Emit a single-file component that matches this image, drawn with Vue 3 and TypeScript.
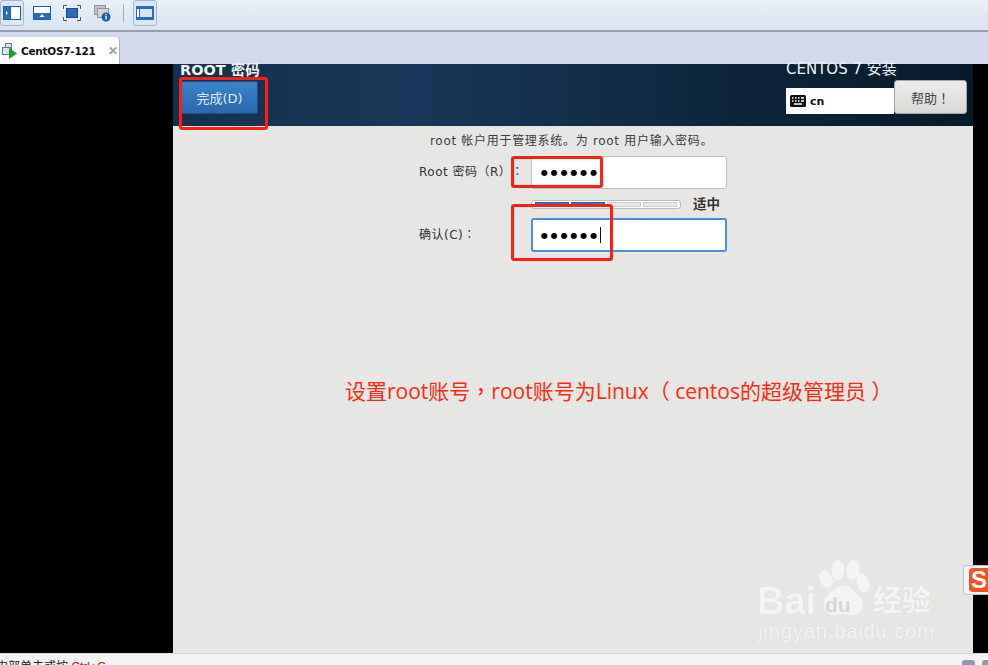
<script setup lang="ts">
const dots = '●●●●●●'
const tools: { id: string; active: boolean }[] = [
  { id: 'a', active: true },
  { id: 'b', active: false },
  { id: 'c', active: false },
  { id: 'd', active: false },
]
</script>

<template>
  <div class="app">
    <div class="toolbar">
      <button v-for="t in tools" :key="t.id" class="tool" :class="{ on: t.active }">
        <svg v-if="t.id === 'a'" width="18" height="14" viewBox="0 0 18 14">
          <rect x="0.5" y="0.5" width="17" height="13" fill="#fff" stroke="#1f5fa8" />
          <rect x="1" y="1" width="7" height="12" fill="#2a6db5" />
          <path d="M3 5l2 2-2 2z" fill="#fff" />
        </svg>
        <svg v-else-if="t.id === 'b'" width="18" height="14" viewBox="0 0 18 14">
          <rect x="0.5" y="0.5" width="17" height="13" fill="#fff" stroke="#1f5fa8" />
          <rect x="1" y="7" width="16" height="6" fill="#2a6db5" />
          <path d="M6.500 11l2.500-3 2.500 3z" fill="#fff" />
        </svg>
        <svg v-else-if="t.id === 'c'" width="18" height="16" viewBox="0 0 18 16">
          <rect x="3.500" y="3.500" width="11" height="9" fill="#2a6db5" stroke="#174e8c" />
          <path d="M0.500 4V0.500H4M14 0.500h3.500V4M17.500 12v3.500H14M4 15.500H0.500V12" fill="none" stroke="#4a5560" />
        </svg>
        <svg v-else width="17" height="17" viewBox="0 0 17 17">
          <rect x="0.500" y="0.500" width="11" height="9" fill="#bfc5cc" stroke="#8b939c" />
          <rect x="3.500" y="3.500" width="11" height="9" fill="#d3d7dc" stroke="#8b939c" />
          <circle cx="12" cy="12" r="4.500" fill="#1f5fa8" />
          <rect x="11.400" y="11" width="1.300" height="3.500" fill="#fff" />
          <rect x="11.400" y="9" width="1.300" height="1.300" fill="#fff" />
        </svg>
      </button>
      <span class="sep"></span>
      <button class="tool on">
        <svg width="18" height="14" viewBox="0 0 18 14">
          <rect x="0" y="0" width="18" height="14" fill="#2a6db5" />
          <rect x="4" y="3" width="12" height="8" fill="#d6e4f3" />
          <rect x="1" y="3" width="2" height="8" fill="#fff" />
        </svg>
      </button>
    </div>

    <div class="tabbar">
      <div class="tab">
        <svg class="vm" width="16" height="16" viewBox="0 0 16 16">
          <rect x="3.500" y="0.500" width="6" height="6" fill="#d9e3ef" stroke="#5d7a9c" />
          <rect x="0.500" y="4.500" width="8" height="7" fill="#d9e3ef" stroke="#5d7a9c" />
          <path d="M7 5l8 5.500-8 5.500z" fill="#1ea32a" />
        </svg>
        <span class="tab-name">CentOS7-121</span>
        <span class="tab-x">✕</span>
      </div>
    </div>

    <div class="stage">
      <div class="side-left"></div>
      <div class="screen">
        <header class="head">
          <div class="head-left">
            <div class="title">ROOT 密码</div>
            <button class="done">完成(D)</button>
          </div>
          <div class="head-right">
            <div class="product">CENTOS 7 安装</div>
            <div class="head-row">
              <div class="kbd">
                <svg width="16" height="12" viewBox="0 0 16 12">
                  <rect width="16" height="12" rx="1.500" fill="#111" />
                  <path d="M2 3h1.500M5 3h1.500M8 3h1.500M11 3h3M2 6h1.500M5 6h1.500M8 6h1.500M11 6h3M4 9h8" stroke="#fff" stroke-width="1.300" />
                </svg>
                <span>cn</span>
              </div>
              <button class="help">帮助！</button>
            </div>
          </div>
        </header>

        <main class="body">
          <p class="intro">root 帐户用于管理系统。为 root 用户输入密码。</p>
          <div class="row first">
            <label class="lbl">Root 密码（R）<span class="colon">：</span></label>
            <div class="field">{{ dots }}</div>
          </div>
          <div class="meter-row">
            <div class="meter">
              <i class="fill"></i><i class="fill"></i><i></i><i></i>
            </div>
            <span class="meter-txt">适中</span>
          </div>
          <div class="row second">
            <label class="lbl">确认(C)：</label>
            <div class="field focus">{{ dots }}<b class="caret"></b></div>
          </div>
          <p class="note">设置root账号，root账号为Linux（ centos的超级管理员 ）</p>
        </main>

        <span class="mark m1"></span>
        <span class="mark m2"></span>
        <span class="mark m3"></span>
      </div>
      <div class="side-right"></div>
    </div>

    <div class="status">
      <span class="status-txt">内部单击或按 <em>Ctrl+G</em></span>
      <span class="status-icons"><i></i><i></i></span>
    </div>

    <div class="wm">
      <svg class="paw" width="52" height="56" viewBox="0 0 52 56">
        <g fill="#f4f4f3">
          <ellipse cx="8" cy="19" rx="6.500" ry="9" transform="rotate(-20 8 19)" />
          <ellipse cx="20" cy="10" rx="6.500" ry="10" />
          <ellipse cx="35" cy="10" rx="6.500" ry="10" transform="rotate(6 35 10)" />
          <ellipse cx="45" cy="23" rx="6" ry="10" transform="rotate(-18 45 23)" />
          <path d="M26 26c6 0 9 4 14 9 7 6 7 20-6 20-4 0-6-1-8-1s-5 1-9 1c-13 0-14-13-7-20 5-5 9-9 16-9z" />
        </g>
      </svg>
      <span class="wm-bai">Bai</span>
      <span class="wm-du">du</span>
      <span class="wm-jy">经验</span>
      <span class="wm-url">jingyan.baidu.com</span>
    </div>

    <div class="sogou"><span>S</span></div>
  </div>
</template>

<style>
html, body { margin: 0; padding: 0; overflow: hidden; background: #fff; }
</style>

<style scoped>
.app {
  position: relative;
  width: 988px;
  height: 665px;
  overflow: hidden;
  display: flex;
  flex-direction: column;
  font-family: "Liberation Sans", "Noto Sans CJK SC", sans-serif;
}
.toolbar {
  height: 30px;
  flex: none;
  display: flex;
  align-items: flex-start;
  gap: 6px;
  background: linear-gradient(#e9f0f8, #d8e4f1);
  border-bottom: 2px solid #9a9fa8;
}
.tool {
  width: 24px;
  height: 26px;
  padding: 0;
  margin: 0;
  border: 1px solid transparent;
  border-radius: 3px;
  background: none;
  display: flex;
  align-items: center;
  justify-content: center;
}
.tool.on {
  border-color: #9fb8d8;
  background: #dbe7f5;
}
.sep {
  width: 1px;
  height: 18px;
  background: #a4afbb;
  margin: 4px 3px 0 3px;
}
.tabbar {
  height: 32px;
  flex: none;
  display: flex;
  align-items: flex-end;
  background: #d3d9ec;
}
.tab {
  width: 120px;
  height: 27px;
  box-sizing: border-box;
  background: #fff;
  border-right: 1px solid #a8b0c4;
  border-top-right-radius: 4px;
  display: flex;
  align-items: center;
  gap: 3px;
  padding-left: 2px;
}
.vm { flex: none; }
.tab-name {
  font-family: "DejaVu Sans", sans-serif;
  font-size: 10.500px;
  font-weight: 700;
  color: #111;
  white-space: nowrap;
  letter-spacing: -0.25px;
}
.tab-x { font-size: 12px; color: #8fa0b3; margin-left: 9px; font-weight: 700; }
.stage {
  flex: 1;
  display: flex;
  min-height: 0;
  background: #000;
}
.side-left { width: 173px; flex: none; background: #000; }
.side-right { flex: 1; background: #000; }
.screen {
  position: relative;
  width: 800px;
  flex: none;
  display: flex;
  flex-direction: column;
  background: #e6e6e4;
}
.head {
  height: 62px;
  flex: none;
  box-sizing: border-box;
  display: flex;
  justify-content: space-between;
  background: linear-gradient(90deg, #14304f 0%, #17385a 30%, #0d2740 65%, #071a2a 100%);
  color: #fff;
}
.head-left { padding-left: 7px; }
.title {
  font-family: "DejaVu Sans", "Noto Sans CJK SC", sans-serif;
  font-weight: 700;
  font-size: 14.500px;
  line-height: 14px;
  margin-top: -1px;
  color: #f2f2f2;
  white-space: nowrap;
}
.done {
  display: block;
  width: 77px;
  height: 33px;
  margin: 4px 0 0 1px;
  padding: 0;
  border: 1px solid #1c4f87;
  border-radius: 2px;
  background: linear-gradient(#3b83cc, #2a67ae);
  color: #dfe9f4;
  font-family: "DejaVu Sans", "Noto Sans CJK SC", sans-serif;
  font-size: 13px;
}
.head-right { width: 187px; }
.product {
  font-family: "DejaVu Sans", "Noto Sans CJK SC", sans-serif;
  font-size: 15px;
  line-height: 14px;
  color: #eef1f4;
  margin-top: -2px;
  white-space: nowrap;
}
.head-row { display: flex; align-items: flex-start; margin-top: 1px; }
.kbd {
  margin-top: 11px;
  width: 108px;
  height: 26px;
  background: #fff;
  display: flex;
  align-items: center;
  gap: 4px;
  padding-left: 4px;
  box-sizing: border-box;
  color: #111;
  font-family: "DejaVu Sans", sans-serif;
  font-size: 11px;
  font-weight: 700;
}
.help {
  width: 73px;
  height: 34px;
  margin-top: 3px;
  padding: 0;
  border: 1px solid #a5a5a5;
  border-radius: 3px;
  background: linear-gradient(#ececea, #d8d8d6);
  color: #444;
  font-family: "DejaVu Sans", "Noto Sans CJK TC", sans-serif;
  font-size: 13px;
}
.body {
  flex: 1;
  display: flex;
  flex-direction: column;
  font-family: "DejaVu Sans", "Noto Sans CJK SC", sans-serif;
  font-size: 12px;
  color: #333;
}
.intro {
  margin: 8px 0 0 257px;
  line-height: 14px;
  letter-spacing: 0.7px;
  color: #3c3c3c;
  white-space: nowrap;
}
.row { display: flex; align-items: center; }
.first { margin-top: 8px; }
.second { margin-top: 8px; }
.lbl {
  width: 358px;
  box-sizing: border-box;
  padding-left: 246px;
  white-space: nowrap;
  letter-spacing: 0.5px;
  font-family: "DejaVu Sans", "Noto Sans CJK TC", sans-serif;
  position: relative;
  top: -2px;
}
.colon { margin-left: 6px; }
.field {
  width: 196px;
  height: 33px;
  box-sizing: border-box;
  background: #fff;
  border: 1px solid #bdbdbd;
  border-radius: 3px;
  padding-left: 9px;
  display: flex;
  align-items: center;
  font-family: "DejaVu Sans", sans-serif;
  font-size: 8px;
  letter-spacing: 2.850px;
  color: #000;
}
.focus { border: 2px solid #4a90d9; padding-left: 8px; height: 34px; }
.caret { width: 1px; height: 16px; background: #111; }
.meter-row {
  display: flex;
  align-items: center;
  margin: 9px 0 0 358px;
  height: 12px;
}
.meter {
  width: 150px;
  height: 9px;
  box-sizing: border-box;
  border: 1px solid #bbb;
  border-radius: 3px;
  background: #fff;
  display: flex;
  gap: 2px;
  padding: 1px 3px;
}
.meter i { flex: 1; background: #e9e9e7; border: 1px solid #cfcfcf; box-sizing: border-box; }
.meter i.fill { background: #3678bf; border-color: #2b5f9b; }
.meter-txt { margin-left: 12px; font-weight: 700; font-size: 13.500px; color: #333; position: relative; top: -1px; }
.note {
  margin: 125px 0 0 172px;
  font-family: "Open Sans", "Noto Sans CJK TC", sans-serif;
  font-size: 21px;
  line-height: 28px;
  color: #ff2a12;
  white-space: nowrap;
}
.mark {
  position: absolute;
  border: 3px solid #ff1f12;
  border-radius: 3px;
  box-sizing: border-box;
}
.m1 { left: 6px; top: 13px; width: 89px; height: 53px; }
.m2 { left: 338px; top: 92px; width: 92px; height: 32px; }
.m3 { left: 338px; top: 140px; width: 102px; height: 57px; }
.status {
  height: 12px;
  flex: none;
  box-sizing: border-box;
  background: #f3f3f3;
  border-top: 1px solid #d8d8d8;
  overflow: hidden;
  display: flex;
  justify-content: space-between;
  font-size: 12px;
  line-height: 16px;
  color: #222;
}
.status-txt { margin: 5px 0 0 -4px; white-space: nowrap; }
.status-txt em { font-style: normal; color: #b11; }
.status-icons { display: flex; gap: 7px; padding: 6px 0 0; margin-right: -7px; }
.status-icons i { width: 13px; height: 13px; border-radius: 3px; background: #8d9bb0; }
.wm {
  position: absolute;
  left: 755px;
  top: 560px;
  width: 190px;
  height: 84px;
  color: #f4f4f3;
  font-family: "Liberation Sans", "Noto Sans CJK SC", sans-serif;
  font-weight: 700;
  text-shadow: 0 0 1px #cfcfcd;
}
.paw { position: absolute; left: 63px; top: 0; }
.wm-bai, .wm-du, .wm-jy, .wm-url { position: absolute; white-space: nowrap; }
.wm-bai { left: 2px; top: 22px; font-size: 38px; line-height: 38px; }
.wm-du { left: 70px; top: 34px; font-size: 21px; line-height: 22px; color: #d6d6d4; text-shadow: none; }
.wm-jy { left: 118px; top: 24px; font-size: 29px; line-height: 34px; }
.wm-url {
  left: 3px;
  top: 60px;
  font-size: 20px;
  font-weight: 400;
  line-height: 22px;
  letter-spacing: 0.9px;
}
.sogou {
  position: absolute;
  left: 963px;
  top: 565px;
  width: 30px;
  height: 30px;
  box-sizing: border-box;
  background: #f4f4f6;
  border: 1px solid #b8c4d8;
  border-radius: 3px;
  padding: 2px 0 0 5px;
}
.sogou span {
  display: block;
  width: 30px;
  height: 24px;
  border-radius: 4px;
  background: #f4511e;
  color: #fff;
  font-weight: 700;
  font-size: 24px;
  line-height: 24px;
  padding-left: 2px;
}
</style>
